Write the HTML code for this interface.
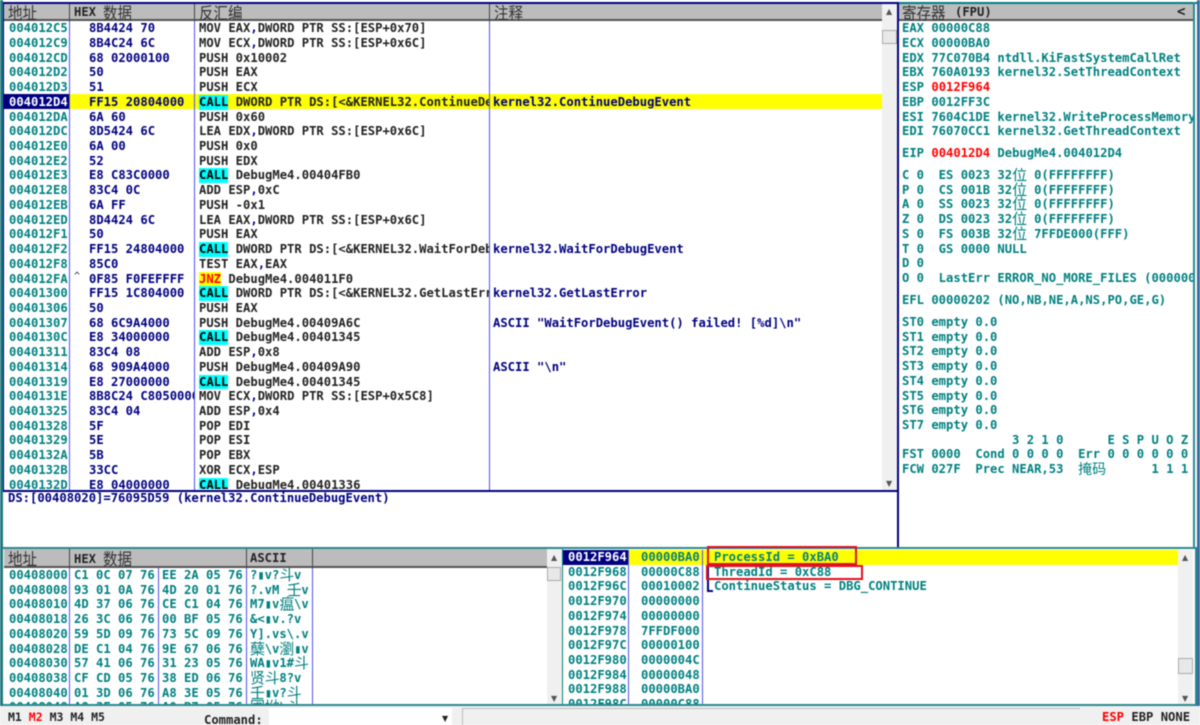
<!DOCTYPE html>
<html><head><meta charset="utf-8"><style>
html,body{margin:0;padding:0;background:#fff;width:1200px;height:725px;overflow:hidden}
#r{position:relative;width:1200px;height:725px;overflow:hidden;background:#fff;filter:blur(.4px);font:bold 12.2px/14.72px "DejaVu Sans Mono","Liberation Mono","Noto Sans CJK SC",monospace}
#r div{position:absolute}
.c{white-space:pre;overflow:hidden}
.c p{margin:0;height:14.72px;line-height:14.72px;white-space:pre}
.t{color:#008080}.n{color:#000080}.k{color:#222}
.h{background:#bcbcbc;border-bottom:2px solid #555;box-sizing:border-box}
.s{background:#444;width:1px}
.v{background:#5050f0;width:1px}
.cj{font:400 14.5px/17px "Noto Sans CJK SC",sans-serif;color:#333;transform-origin:0 50%;transform:scaleY(1.15)}
.x{font:400 15px/14px "Noto Sans CJK SC",sans-serif;color:#008080;display:inline-block;width:14.7px;height:14px;overflow:visible;vertical-align:top;letter-spacing:0}
.sb{background:#f0f0f0}
.th{background:#e8e8e8;border:1px solid #aaa;box-sizing:border-box}
u{text-decoration:none;background:#0ff;color:#000;display:inline-block;height:14.72px}
i{font-style:normal;color:#000090}
.ar{color:#555;font:400 8px/8px "DejaVu Sans",sans-serif}
.r{color:#f00}
</style></head><body><div id="r">

<div style="left:0;top:0;width:1200px;height:3px;background:#fff"></div>
<div style="left:0;top:0;width:3px;height:725px;background:#1f7a80"></div>
<div style="left:1197px;top:0;width:3px;height:706px;background:#3c6a9c"></div>

<!-- CPU pane -->
<div style="left:3px;top:2px;width:895px;height:2px;background:#000080"></div>
<div style="left:3px;top:490px;width:895px;height:2px;background:#000080"></div>
<div style="left:3px;top:2px;width:1px;height:489px;background:#000080"></div>
<div style="left:897px;top:2px;width:2px;height:546px;background:#000080"></div>
<div class="h" style="left:4px;top:4px;width:878px;height:17px"></div>
<div style="left:4px;top:94px;width:65px;height:15px;background:#000080"></div>
<div style="left:69px;top:94px;width:813px;height:15px;background:#ff0"></div>
<div class="cj" style="left:8px;top:4px">地址</div>
<div class="k" style="left:74px;top:5px;white-space:pre">HEX</div>
<div class="cj" style="left:103px;top:4px">数据</div>
<div class="cj" style="left:199px;top:4px">反汇编</div>
<div class="cj" style="left:494px;top:4px">注释</div>
<div class="s" style="left:69px;top:4px;height:17px"></div>
<div class="s" style="left:194px;top:4px;height:17px"></div>
<div class="s" style="left:489px;top:4px;height:17px"></div>
<div class="v" style="left:69px;top:21px;height:469px"></div>
<div class="v" style="left:194px;top:21px;height:469px"></div>
<div class="v" style="left:489px;top:21px;height:469px"></div>

<div class="c t" style="left:9px;top:21.3px;width:60px;height:468px"><p>004012C5</p><p>004012C9</p><p>004012CD</p><p>004012D2</p><p>004012D3</p><p style="color:#fff">004012D4</p><p>004012DA</p><p>004012DC</p><p>004012E0</p><p>004012E2</p><p>004012E3</p><p>004012E8</p><p>004012EB</p><p>004012ED</p><p>004012F1</p><p>004012F2</p><p>004012F8</p><p>004012FA</p><p>00401300</p><p>00401306</p><p>00401307</p><p>0040130C</p><p>00401311</p><p>00401314</p><p>00401319</p><p>0040131E</p><p>00401325</p><p>00401328</p><p>00401329</p><p>0040132A</p><p>0040132B</p><p>0040132D</p></div>

<div class="c n" style="left:89px;top:21.3px;width:105px;height:468px"><p>8B4424 70</p><p>8B4C24 6C</p><p>68 02000100</p><p>50</p><p>51</p><p>FF15 20804000</p><p>6A 60</p><p>8D5424 6C</p><p>6A 00</p><p>52</p><p>E8 C83C0000</p><p>83C4 0C</p><p>6A FF</p><p>8D4424 6C</p><p>50</p><p>FF15 24804000</p><p>85C0</p><p>0F85 F0FEFFFF</p><p>FF15 1C804000</p><p>50</p><p>68 6C9A4000</p><p>E8 34000000</p><p>83C4 08</p><p>68 909A4000</p><p>E8 27000000</p><p>8B8C24 C8050000</p><p>83C4 04</p><p>5F</p><p>5E</p><p>5B</p><p>33CC</p><p>E8 04000000</p></div>
<div class="k" style="left:74px;top:270px;font-weight:400;font-size:10px">^</div>

<div class="c k" style="left:199px;top:21.3px;width:290px;height:468px"><p>MOV EAX<i>,</i>DWORD PTR SS:[ESP+0x70]</p><p>MOV ECX<i>,</i>DWORD PTR SS:[ESP+0x6C]</p><p>PUSH 0x10002</p><p>PUSH EAX</p><p>PUSH ECX</p><p><u>CALL</u> DWORD PTR DS:[&lt;&amp;KERNEL32.ContinueDebugEvent&gt;]</p><p>PUSH 0x60</p><p>LEA EDX<i>,</i>DWORD PTR SS:[ESP+0x6C]</p><p>PUSH 0x0</p><p>PUSH EDX</p><p><u>CALL</u> DebugMe4.00404FB0</p><p>ADD ESP<i>,</i>0xC</p><p>PUSH -0x1</p><p>LEA EAX<i>,</i>DWORD PTR SS:[ESP+0x6C]</p><p>PUSH EAX</p><p><u>CALL</u> DWORD PTR DS:[&lt;&amp;KERNEL32.WaitForDebugEvent&gt;]</p><p>TEST EAX<i>,</i>EAX</p><p><u style="background:#ff0;color:#f00">JNZ</u> DebugMe4.004011F0</p><p><u>CALL</u> DWORD PTR DS:[&lt;&amp;KERNEL32.GetLastError&gt;]</p><p>PUSH EAX</p><p>PUSH DebugMe4.00409A6C</p><p><u>CALL</u> DebugMe4.00401345</p><p>ADD ESP<i>,</i>0x8</p><p>PUSH DebugMe4.00409A90</p><p><u>CALL</u> DebugMe4.00401345</p><p>MOV ECX<i>,</i>DWORD PTR SS:[ESP+0x5C8]</p><p>ADD ESP<i>,</i>0x4</p><p>POP EDI</p><p>POP ESI</p><p>POP EBX</p><p>XOR ECX<i>,</i>ESP</p><p><u>CALL</u> DebugMe4.00401336</p></div>

<div class="n" style="left:493px;top:94.9px;white-space:pre">kernel32.ContinueDebugEvent</div>
<div class="n" style="left:493px;top:242.1px;white-space:pre">kernel32.WaitForDebugEvent</div>
<div class="n" style="left:493px;top:286.3px;white-space:pre">kernel32.GetLastError</div>
<div class="n" style="left:493px;top:315.7px;white-space:pre">ASCII "WaitForDebugEvent() failed! [%d]\n"</div>
<div class="n" style="left:493px;top:359.9px;white-space:pre">ASCII "\n"</div>

<!-- CPU scrollbar -->
<div class="sb" style="left:882px;top:4px;width:15px;height:486px"></div>
<div class="ar" style="left:886px;top:8px">▲</div>
<div class="th" style="left:882px;top:30px;width:15px;height:14px"></div>
<div class="ar" style="left:886px;top:480px">▼</div>

<!-- info -->
<div class="n" style="left:8px;top:491px;white-space:pre">DS:[00408020]=76095D59 (kernel32.ContinueDebugEvent)</div>

<!-- Registers -->
<div style="left:899px;top:2px;width:298px;height:2px;background:#008080"></div>
<div style="left:1193px;top:2px;width:2px;height:546px;background:#2a8a90"></div>
<div class="h" style="left:899px;top:4px;width:294px;height:17px"></div>
<div class="cj" style="left:902px;top:4px">寄存器</div>
<div class="k" style="left:955px;top:5px;white-space:pre">(FPU)</div>
<div class="k" style="left:1177px;top:5px;font-size:14px">&lt;</div>
<div class="c t" style="left:902px;top:21.3px;width:291px;height:118px"><p>EAX 00000C88</p><p>ECX 00000BA0</p><p>EDX 77C070B4 ntdll.KiFastSystemCallRet</p><p>EBX 760A0193 kernel32.SetThreadContext</p><p>ESP <span class="r">0012F964</span></p><p>EBP 0012FF3C</p><p>ESI 7604C1DE kernel32.WriteProcessMemory</p><p>EDI 76070CC1 kernel32.GetThreadContext</p></div>
<div class="c t" style="left:902px;top:146px;width:291px;height:15px"><p>EIP <span class="r">004012D4</span> DebugMe4.004012D4</p></div>
<div class="c t" style="left:902px;top:168px;width:291px;height:118px"><p>C 0  ES 0023 32<span class="x">位</span> 0(FFFFFFFF)</p><p>P 0  CS 001B 32<span class="x">位</span> 0(FFFFFFFF)</p><p>A 0  SS 0023 32<span class="x">位</span> 0(FFFFFFFF)</p><p>Z 0  DS 0023 32<span class="x">位</span> 0(FFFFFFFF)</p><p>S 0  FS 003B 32<span class="x">位</span> 7FFDE000(FFF)</p><p>T 0  GS 0000 NULL</p><p>D 0</p><p>O 0  LastErr ERROR_NO_MORE_FILES (00000012)</p></div>
<div class="c t" style="left:902px;top:293px;width:291px;height:15px"><p>EFL 00000202 (NO,NB,NE,A,NS,PO,GE,G)</p></div>
<div class="c t" style="left:902px;top:315px;width:291px;height:165px"><p>ST0 empty 0.0</p><p>ST1 empty 0.0</p><p>ST2 empty 0.0</p><p>ST3 empty 0.0</p><p>ST4 empty 0.0</p><p>ST5 empty 0.0</p><p>ST6 empty 0.0</p><p>ST7 empty 0.0</p><p>               3 2 1 0      E S P U O Z</p><p>FST 0000  Cond 0 0 0 0  Err 0 0 0 0 0 0</p><p>FCW 027F  Prec NEAR,53  <span class="x" style="width:29.4px;font-size:14px">掩码</span>      1 1 1 1</p></div>

<!-- divider -->
<div style="left:3px;top:547px;width:1194px;height:2px;background:#2a8a90"></div>
<div style="left:3px;top:704px;width:1194px;height:2px;background:#2a8a90"></div>

<!-- Dump -->
<div class="h" style="left:4px;top:549px;width:543px;height:19px"></div>
<div class="cj" style="left:8px;top:550px">地址</div>
<div class="k" style="left:74px;top:552px;white-space:pre">HEX</div>
<div class="cj" style="left:103px;top:550px">数据</div>
<div class="k" style="left:250px;top:551px">ASCII</div>
<div class="s" style="left:69px;top:549px;height:19px"></div>
<div class="s" style="left:246px;top:549px;height:19px"></div>
<div class="s" style="left:312px;top:549px;height:19px"></div>
<div class="v" style="left:69px;top:568px;height:136px"></div>
<div class="v" style="left:158px;top:568px;height:136px"></div>
<div class="v" style="left:246px;top:568px;height:136px"></div>
<div class="v" style="left:312px;top:568px;height:136px"></div>
<div class="c t" style="left:9px;top:568px;width:60px;height:136px"><p>00408000</p><p>00408008</p><p>00408010</p><p>00408018</p><p>00408020</p><p>00408028</p><p>00408030</p><p>00408038</p><p>00408040</p><p>00408048</p></div>
<div class="c t" style="left:74px;top:568px;width:84px;height:136px"><p>C1 0C 07 76</p><p>93 01 0A 76</p><p>4D 37 06 76</p><p>26 3C 06 76</p><p>59 5D 09 76</p><p>DE C1 04 76</p><p>57 41 06 76</p><p>CF CD 05 76</p><p>01 3D 06 76</p><p>A8 3E 05 76</p></div>
<div class="c t" style="left:162px;top:568px;width:84px;height:136px"><p>EE 2A 05 76</p><p>4D 20 01 76</p><p>CE C1 04 76</p><p>00 BF 05 76</p><p>73 5C 09 76</p><p>9E 67 06 76</p><p>31 23 05 76</p><p>38 ED 06 76</p><p>A8 3E 05 76</p><p>A0 B7 05 76</p></div>
<div class="c t" style="left:250px;top:568px;width:62px;height:136px"><p>?▮v?<span class="x">斗</span>v</p><p>?.vM <span class="x">壬</span>v</p><p>M7▮v<span class="x">瘟</span>\v</p><p>&amp;&lt;▮v.?v</p><p>Y].vs\.v</p><p><span class="x">蘖</span>\v<span class="x">瀏</span>▮v</p><p>WA▮v1#<span class="x">斗</span></p><p><span class="x">贤</span><span class="x">斗</span>8?v</p><p><span class="x">壬</span>▮v?<span class="x">斗</span></p><p><span class="x">圃</span><span class="x">坳</span>\<span class="x">斗</span></p></div>
<div class="sb" style="left:547px;top:549px;width:15px;height:155px"></div>
<div class="ar" style="left:551px;top:554px">▲</div>
<div class="th" style="left:547px;top:567px;width:14px;height:14px"></div>
<div class="ar" style="left:551px;top:695px">▼</div>

<!-- Stack -->
<div style="left:562px;top:549px;width:1px;height:155px;background:#008080"></div>
<div style="left:563px;top:550px;width:65px;height:15px;background:#000080"></div>
<div style="left:629px;top:550px;width:549px;height:15px;background:#ff0"></div>
<div class="v" style="left:628px;top:550px;height:154px"></div>
<div class="v" style="left:702px;top:550px;height:154px"></div>
<div class="c t" style="left:568px;top:550px;width:60px;height:154px"><p style="color:#fff">0012F964</p><p>0012F968</p><p>0012F96C</p><p>0012F970</p><p>0012F974</p><p>0012F978</p><p>0012F97C</p><p>0012F980</p><p>0012F984</p><p>0012F988</p><p>0012F98C</p></div>
<div class="c t" style="left:641px;top:550px;width:60px;height:154px"><p>00000BA0</p><p>00000C88</p><p>00010002</p><p>00000000</p><p>00000000</p><p>7FFDF000</p><p>00000100</p><p>0000004C</p><p>00000048</p><p>00000BA0</p><p>00000C88</p></div>
<div class="c t" style="left:714px;top:550px;width:400px;height:60px"><p>ProcessId = 0xBA0</p><p>ThreadId = 0xC88</p><p>ContinueStatus = DBG_CONTINUE</p></div>
<div style="left:707px;top:565px;width:2px;height:27px;background:#000080"></div>
<div style="left:707px;top:590px;width:6px;height:2px;background:#000080"></div>
<div style="left:707px;top:546px;width:150px;height:19px;border:2px solid #e01020;box-sizing:border-box"></div>
<div style="left:706px;top:565px;width:157px;height:15px;border:2px solid #e01020;box-sizing:border-box"></div>
<div class="sb" style="left:1178px;top:550px;width:15px;height:154px"></div>
<div class="ar" style="left:1182px;top:554px">▲</div>
<div class="th" style="left:1178px;top:658px;width:15px;height:16px"></div>
<div class="ar" style="left:1182px;top:695px">▼</div>
<div style="left:1195px;top:549px;width:2px;height:155px;background:#2a8a90"></div>

<!-- status bar -->
<div style="left:0;top:706px;width:1200px;height:19px;background:#f0f0f0"></div>
<div class="k" style="left:8px;top:710px;font-size:11.5px;white-space:pre">M1 <span class="r">M2</span> M3 M4 M5</div>
<div class="k" style="left:204px;top:713px;white-space:pre">Command:</div>
<div style="left:269px;top:708px;width:183px;height:17px;background:#fff"></div>
<div class="ar" style="left:442px;top:715px;color:#222">▼</div>
<div style="left:462px;top:708px;width:618px;height:17px;border:1px solid #bbb;border-right:0;border-bottom:0;box-sizing:border-box;background:#f0f0f0"></div>
<div class="k" style="left:1102px;top:710px;white-space:pre"><span class="r">ESP</span> EBP NONE</div>

</div></body></html>
